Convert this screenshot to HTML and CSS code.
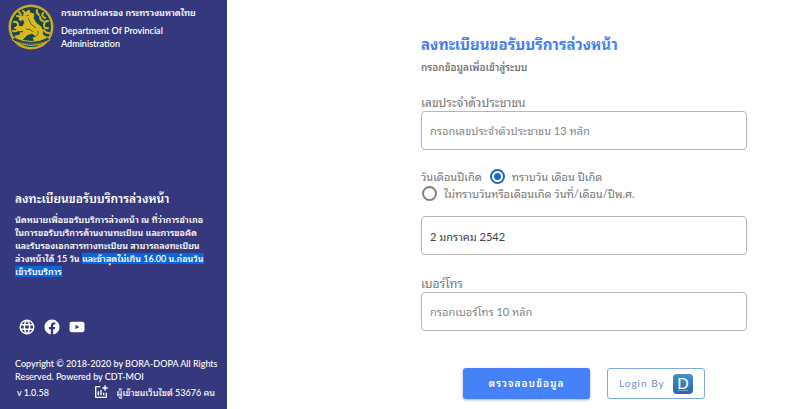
FILE: index.html
```html
<!DOCTYPE html>
<html lang="th">
<head>
<meta charset="utf-8">
<meta name="viewport" content="width=device-width, initial-scale=1">
<title>ลงทะเบียนขอรับบริการล่วงหน้า</title>
<link rel="stylesheet" href="styles.css">
</head>
<body>
<div class="page">
  <aside class="sidebar">
    <header class="brand">
      <svg class="seal" viewBox="0 0 46 46" aria-hidden="true">
        <circle cx="23" cy="23" r="22.5" fill="#c9ac22"/>
        <circle cx="23" cy="23" r="20" fill="#17464f"/>
        <g fill="none" stroke="#d6b51f" stroke-width="2" stroke-linecap="round">
          <path d="M6 18q3-1 4 2t-3 4M9 12q4 0 4 4M5 27q4 1 5-2M8 32q4 1 5-3M35 9q-2 3 2 5M40 17q-4 0-4 4t4 3M29 6q-1 3 2 5M41 29q-4 0-5-3M15 7q3 1 1 4M38 33q-3 0-4-3M32 13q0 3 3 4M11 8l2 3"/>
        </g>
        <path fill="#d9b920" stroke="#d9b920" d="M17 9l4-3 1 3 4 1-1 4 3 5 5 4q3 4 1 8l4 3-1 3H27l-2-3 4-1-5-4-5 2-5 5H8l1-3 4-1 3-6-5 1-4-3 2-2 5 1 3-4-2-4-4 1 1-3 4-1z"/>
        <path d="M20 14l3 6 5 4M18 25q5 0 7 3M18 12l3-1M30 27q1 4-2 5" fill="none" stroke="#62651f" stroke-width="1"/>
        <path d="M6 33q17 9 34 0l2 3q-19 11-38 0z" fill="#214953" stroke="#d6b51f" stroke-width="1"/>
        <path d="M11 38q12 4 24 0" fill="none" stroke="#b9a42c" stroke-width="1" stroke-dasharray="1 1"/>
      </svg>
      <div class="brand-text">
        <p>กรมการปกครอง กระทรวงมหาดไทย</p>
        <p>Department Of Provincial<br>Administration</p>
      </div>
    </header>
    <section class="intro">
      <h2>ลงทะเบียนขอรับบริการล่วงหน้า</h2>
      <p>นัดหมายเพื่อขอรับบริการล่วงหน้า ณ ที่ว่าการอำเภอ<br>ในการขอรับบริการด้านงานทะเบียน และการขอคัด<br>และรับรองเอกสารทางทะเบียน สามารถลงทะเบียน<br>ล่วงหน้าได้ 15 วัน <mark>และช้าสุดไม่เกิน 16.00 น.ก่อนวัน<br>เข้ารับบริการ</mark></p>
    </section>
    <nav class="social">
      <a href="#" aria-label="Website"><svg viewBox="0 0 24 24"><path fill="currentColor" d="M12 2a10 10 0 1 0 0 20 10 10 0 0 0 0-20zm6.900 6h-2.950a15.700 15.700 0 0 0-1.380-3.560A8 8 0 0 1 18.900 8zM12 4.040c.830 1.200 1.480 2.530 1.910 3.960h-3.820c.430-1.430 1.080-2.760 1.910-3.960zM4.260 14a8 8 0 0 1 0-4h3.380a16.500 16.500 0 0 0 0 4H4.260zm.820 2h2.950c.320 1.250.780 2.450 1.380 3.560A8 8 0 0 1 5.080 16zm2.950-8H5.080a8 8 0 0 1 4.330-3.560A15.700 15.700 0 0 0 8.030 8zM12 19.960A13.600 13.600 0 0 1 10.090 16h3.820A13.600 13.600 0 0 1 12 19.960zM14.340 14H9.660a14.700 14.700 0 0 1 0-4h4.680a14.700 14.700 0 0 1 0 4zm.250 5.560c.600-1.110 1.060-2.310 1.380-3.560h2.950a8 8 0 0 1-4.330 3.560zM16.360 14a16.500 16.500 0 0 0 0-4h3.380a8 8 0 0 1 0 4h-3.380z"/></svg></a>
      <a href="#" aria-label="Facebook"><svg viewBox="0 0 24 24"><path fill="currentColor" d="M12 2.040C6.500 2.040 2 6.530 2 12.060c0 5 3.660 9.150 8.440 9.900v-7H7.900v-2.900h2.540V9.850c0-2.510 1.490-3.890 3.780-3.890 1.090 0 2.230.190 2.230.190v2.470h-1.260c-1.240 0-1.630.770-1.630 1.560v1.880h2.780l-.450 2.900h-2.330v7A10 10 0 0 0 22 12.060C22 6.530 17.500 2.040 12 2.040z"/></svg></a>
      <a href="#" aria-label="YouTube"><svg viewBox="0 0 24 24"><path fill="currentColor" fill-rule="evenodd" d="M5 5h14q3 0 3 3v8q0 3-3 3H5q-3 0-3-3V8q0-3 3-3zm5 4v6l5-3z"/></svg></a>
    </nav>
    <footer class="legal">
      <p>Copyright © 2018-2020 by BORA-DOPA All Rights Reserved. Powered by CDT-MOI</p>
      <div class="stats">
        <span>v 1.0.58</span>
        <svg viewBox="0 0 24 24" aria-hidden="true"><path fill="currentColor" d="M22 5v2h-3v3h-2V7h-3V5h3V2h2v3h3zm-3 14H5V5h6V3H5a2 2 0 0 0-2 2v14c0 1.100.900 2 2 2h14a2 2 0 0 0 2-2v-6h-2v6zm-4-6v4h2v-4h-2zm-4 4h2V9h-2v8zm-2 0v-6H7v6h2z"/></svg>
        <span>ผู้เข้าชมเว็บไซต์ 53676 คน</span>
      </div>
    </footer>
  </aside>
  <main class="content">
    <form class="form">
      <h1>ลงทะเบียนขอรับบริการล่วงหน้า</h1>
      <p class="lead">กรอกข้อมูลเพื่อเข้าสู่ระบบ</p>
      <div class="field">
        <label for="citizen">เลขประจำตัวประชาชน</label>
        <input id="citizen" type="text" placeholder="กรอกเลขประจำตัวประชาชน 13 หลัก">
      </div>
      <div class="birth" role="radiogroup" aria-labelledby="birth-label">
        <div class="choice"><span id="birth-label">วันเดือนปีเกิด</span><input type="radio" name="birth" id="known" checked><label for="known">ทราบวัน เดือน ปีเกิด</label></div>
        <div class="choice"><input type="radio" name="birth" id="unknown"><label for="unknown">ไม่ทราบวันหรือเดือนเกิด วันที่/เดือน/ปีพ.ศ.</label></div>
      </div>
      <div class="field">
        <input type="text" value="2 มกราคม 2542" aria-labelledby="birth-label">
      </div>
      <div class="field phone">
        <label for="phone">เบอร์โทร</label>
        <input id="phone" type="text" placeholder="กรอกเบอร์โทร 10 หลัก">
      </div>
      <div class="actions">
        <button class="primary" type="button">ตรวจสอบข้อมูล</button>
        <button class="outline" type="button">Login By <span class="dopa"><b>D</b><small></small></span></button>
      </div>
    </form>
  </main>
</div>
</body>
</html>
```
FILE: styles.css
```css
* { box-sizing: border-box; }
body {
  margin: 0;
  background: #fff;
  color: #757575;
  font-family: Lato, "Noto Sans Thai Looped", "Noto Sans Thai", "Noto Sans", sans-serif;
  font-size: 12px;
  line-height: 17px;
}
h1, h2, p { margin: 0; }
.page {
  display: grid;
  grid-template-columns: minmax(0, 227fr) minmax(0, 573fr);
  min-height: 100vh;
}
.sidebar {
  display: flex;
  flex-direction: column;
  background: #35387c;
  color: #fff;
  font-size: 9px;
  line-height: 13px;
}
.brand {
  display: flex;
  gap: 7px;
  padding: 4px 8px;
  font-weight: 600;
}
.seal { flex: none; width: 46px; height: 46px; }
.brand-text { display: grid; gap: 5px; align-content: start; padding-top: 2px; }
.intro { margin-top: auto; padding: 0 8px 0 15px; font-weight: 600; white-space: nowrap; }
.intro h2 { font-size: 12px; line-height: 18px; margin-bottom: 5px; font-weight: 600; }
mark { background: #0a66dc; color: inherit; }
.social { display: flex; gap: 7px; padding: 0 18px; margin: 40px 0 21px; }
.social a { color: inherit; height: 18px; }
.social svg { display: block; width: 18px; height: 18px; }
.legal { padding: 0 8px 8px 15px; font-weight: 500; }
.stats { display: flex; align-items: center; padding: 0 4px 0 2px; white-space: nowrap; height: 18px; }
.stats svg { width: 16px; height: 16px; margin: 0 8px 0 auto; }
.content { padding: 32px 53px 8px 194px; }
.form h1 { color: #4480ee; font-size: 15px; line-height: 24px; font-weight: 700; }
.lead { margin: 3px 0 18px; font-weight: 600; font-size: 10px; }
.field label { display: block; }
.field input {
  display: block;
  width: 100%;
  height: 39px;
  padding: 0 8px;
  border: 1px solid #b5b5b5;
  border-radius: 4px;
  font: inherit;
  font-size: 11px;
  color: #424242;
  background: #fff;
}
.field input::placeholder { color: #858585; opacity: 1; }
.birth { margin: 18px 0 14px; font-size: 11px; }
.choice { display: flex; align-items: center; gap: 7px; white-space: nowrap; }
.choice input {
  appearance: none;
  width: 15px;
  height: 15px;
  margin: 0 0 0 1px;
  border: 2px solid #808080;
  border-radius: 50%;
}
.choice input:checked {
  border-color: #1769d0;
  background: radial-gradient(circle, #1769d0 3px, #fff 4px);
}
.phone { margin-top: 20px; }
.actions { display: flex; justify-content: center; gap: 17px; margin-top: 37px; }
button { height: 31px; border-radius: 3px; font: inherit; letter-spacing: 1px; }
.primary {
  width: 127px;
  border: 0;
  background: #4581f7;
  color: #fff;
  font-size: 10px;
  font-weight: 600;
  box-shadow: 0 1px 3px #0005;
}
.outline {
  display: flex;
  align-items: center;
  justify-content: space-between;
  width: 98px;
  padding: 0 11px;
  border: 1px solid #7fa6e8;
  background: #fff;
  color: #6b8fd0;
  font-size: 10px;
}
.dopa {
  display: grid;
  justify-items: center;
  align-content: center;
  width: 20px;
  height: 20px;
  border-radius: 4px;
  background: linear-gradient(#3f91cf, #2869a6);
  color: #fff;
  font-size: 15px;
  line-height: 14px;
  letter-spacing: 0;
}
.dopa b { font-weight: 500; }
.dopa small { width: 10px; height: 1px; background: #75a8d2; }
```
